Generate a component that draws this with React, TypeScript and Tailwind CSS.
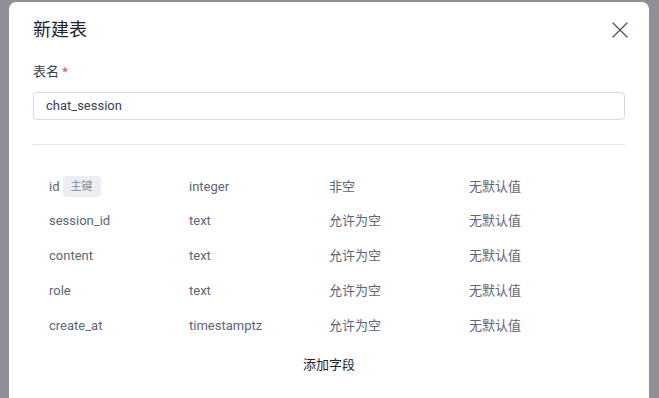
import { X } from "lucide-react"

const columns = [
  { name: "id", type: "integer", nullable: "非空", def: "无默认值", pk: true },
  { name: "session_id", type: "text", nullable: "允许为空", def: "无默认值" },
  { name: "content", type: "text", nullable: "允许为空", def: "无默认值" },
  { name: "role", type: "text", nullable: "允许为空", def: "无默认值" },
  { name: "create_at", type: "timestamptz", nullable: "允许为空", def: "无默认值" },
]

export default function App() {
  return (
    <div
      className="h-[398px] w-[659px] overflow-hidden bg-[#8f9095] pl-[9px] pt-[2px]"
      style={{ fontFamily: "Roboto, 'Noto Sans CJK SC', sans-serif" }}
    >
      <div className="w-[640px] h-[420px] bg-white rounded-[7px] px-6 pt-[14px]">
        <div className="flex items-center justify-between">
          <h2 className="text-[18px] leading-7 font-normal text-[#1f2329]">新建表</h2>
          <button className="-mr-[9px] text-[#4a5468]">
            <X size={28} strokeWidth={1.1} />
          </button>
        </div>

        <div className="mt-[18px]">
          <label className="block text-[13px] leading-5 text-[#374151]">
            表名 <span className="text-[#e5484d]">*</span>
          </label>
          <div className="mt-[10px] h-[28px] border border-[#d5dae5] rounded-[4px] flex items-center px-3 text-[13px] text-[#374151]">
            chat_session
          </div>
        </div>

        <div className="mt-6 border-t border-[#e3e8f0]" />

        <div className="mt-[24px] px-4">
          {columns.map((c) => (
            <div key={c.name} className="grid grid-cols-[140px_140px_140px_140px] h-[34.8px] items-center text-[13px] text-[#5d6679]">
              <div className="flex items-center gap-[3px]">
                <span>{c.name}</span>
                {c.pk && (
                  <span className="px-2 h-[21px] leading-[21px] rounded-[4px] bg-[#eceef1] text-[11px] text-[#868c98]">主键</span>
                )}
              </div>
              <div>{c.type}</div>
              <div>{c.nullable}</div>
              <div>{c.def}</div>
            </div>
          ))}
        </div>

        <div className="mt-[12px] text-center text-[13px] leading-5 text-[#1f2329]">添加字段</div>
      </div>
    </div>
  )
}
